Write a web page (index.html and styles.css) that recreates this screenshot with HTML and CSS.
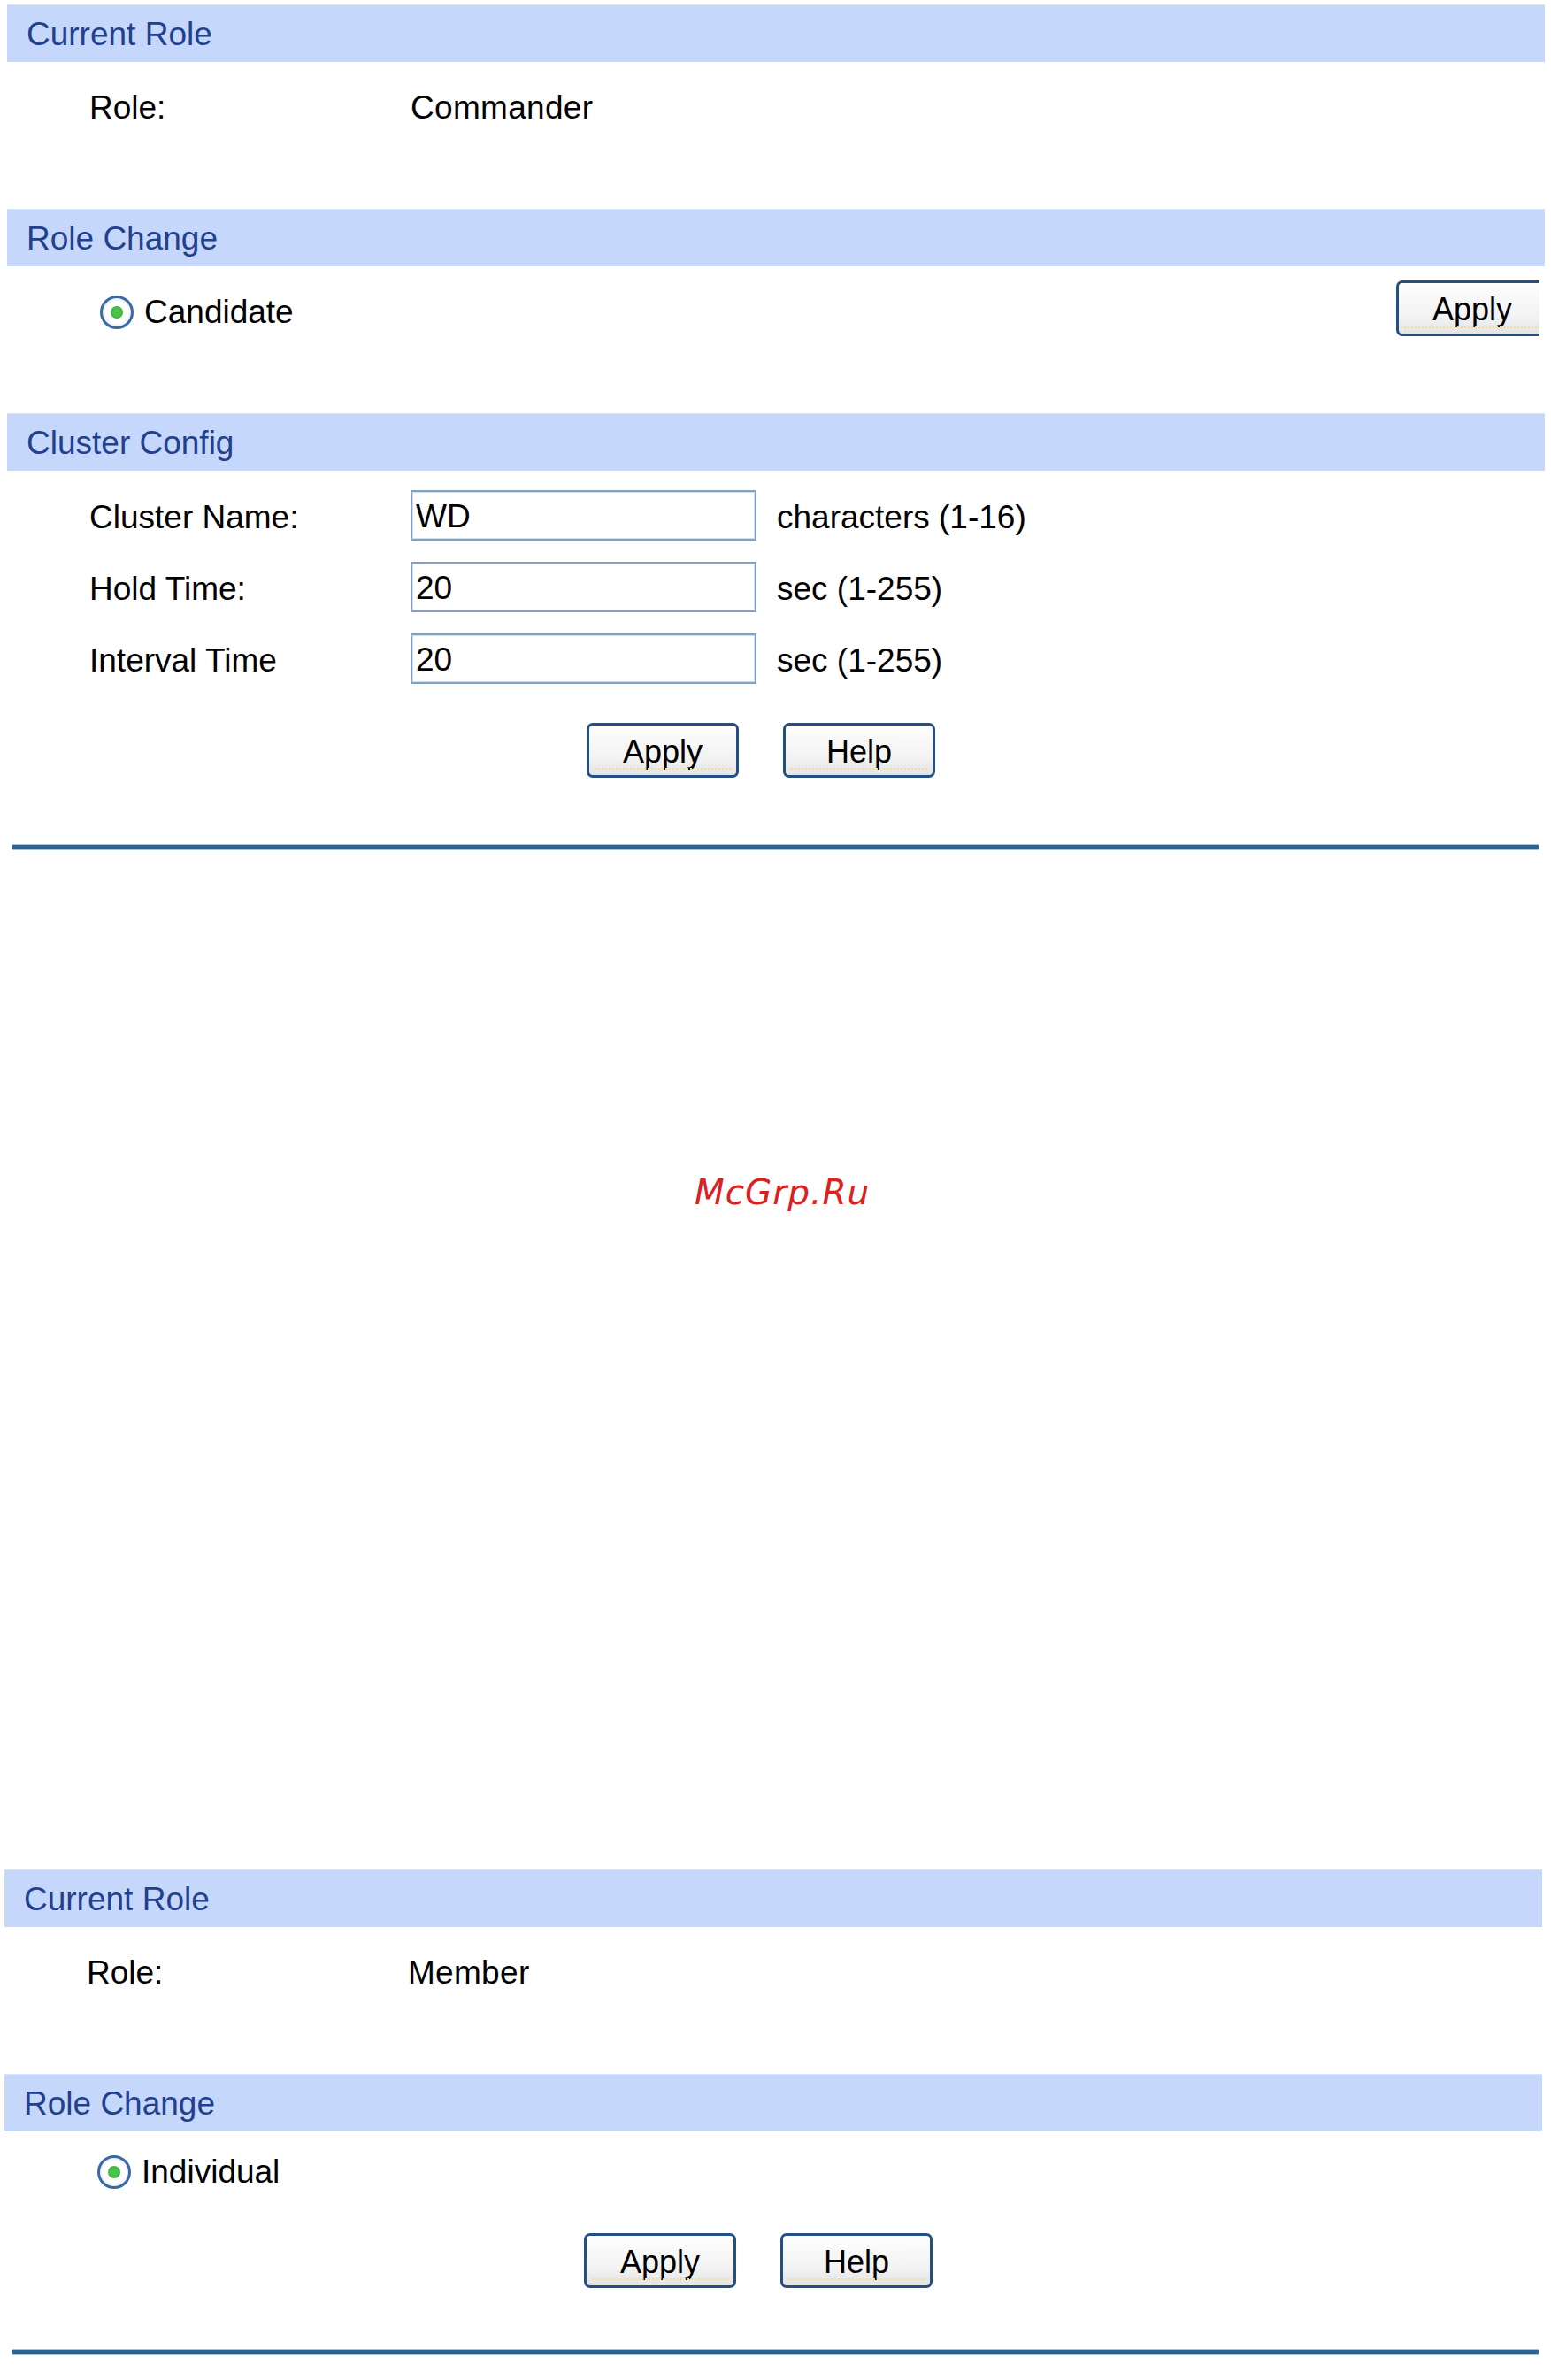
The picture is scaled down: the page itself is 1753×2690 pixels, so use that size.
FILE: index.html
```html
<!DOCTYPE html>
<html lang="en">
<head>
<meta charset="utf-8">
<title>Cluster Config</title>
<link rel="stylesheet" href="styles.css">
</head>
<body>
<div class="page">
  <section class="panel first">
    <div class="bar">Current Role</div>
    <div class="info-row"><span class="label">Role:</span><span class="value">Commander</span></div>
    <div class="bar">Role Change</div>
    <div class="choice-row">
      <div class="choice"><span class="radio"><span class="dot"></span></span><span>Candidate</span></div>
      <div class="btn-clip"><button class="btn" type="button">Apply</button></div>
    </div>
    <div class="bar">Cluster Config</div>
    <div class="form">
      <div class="field"><span class="label">Cluster Name:</span><span class="input">WD</span><span class="suffix">characters (1-16)</span></div>
      <div class="field"><span class="label">Hold Time:</span><span class="input">20</span><span class="suffix">sec (1-255)</span></div>
      <div class="field"><span class="label">Interval Time</span><span class="input">20</span><span class="suffix">sec (1-255)</span></div>
    </div>
    <div class="actions">
      <button class="btn" type="button">Apply</button>
      <button class="btn" type="button">Help</button>
    </div>
    <div class="rule"></div>
  </section>

  <div class="gap-area"><span class="wm">McGrp.Ru</span></div>

  <section class="panel second">
    <div class="bar">Current Role</div>
    <div class="info-row"><span class="label">Role:</span><span class="value">Member</span></div>
    <div class="bar">Role Change</div>
    <div class="choice-row single">
      <div class="choice"><span class="radio"><span class="dot"></span></span><span>Individual</span></div>
    </div>
    <div class="actions">
      <button class="btn" type="button">Apply</button>
      <button class="btn" type="button">Help</button>
    </div>
    <div class="rule"></div>
  </section>
</div>
</body>
</html>
```

FILE: styles.css
```css
html, body {
  margin: 0;
  padding: 0;
  background: #ffffff;
}

body {
  font-family: "Liberation Sans", Arial, sans-serif;
  font-size: 37px;
  color: #000000;
}

.page {
  padding: 5px 7px 0 8px;
}

.bar {
  box-sizing: border-box;
  height: 65px;
  padding: 3px 0 0 22px;
  line-height: 62px;
  background: #c5d8fc;
  color: #22408e;
  box-shadow: inset 0 1px 0 #d6e4fd;
}

.info-row {
  display: flex;
  height: 166px;
  box-sizing: border-box;
  padding: 30px 0 0 93px;
  line-height: 44px;
}

.info-row .label {
  width: 363px;
}

.value {
  letter-spacing: 0.3px;
}

.choice-row {
  display: flex;
  justify-content: space-between;
  align-items: flex-start;
  height: 166px;
  box-sizing: border-box;
  padding: 0 6px 0 105px;
}

.choice {
  display: flex;
  align-items: center;
  gap: 12px;
  height: 44px;
  line-height: 44px;
  margin-top: 30px;
}

.choice-label {
  padding-top: 3px;
}

.radio {
  box-sizing: border-box;
  width: 38px;
  height: 38px;
  border-radius: 50%;
  border: 3px solid #3a6aa6;
  background: radial-gradient(circle, #ffffff 0 55%, #e3e7ee 75%, #cfd6e0 100%);
  display: flex;
  align-items: center;
  justify-content: center;
  flex: none;
}

.dot {
  width: 14px;
  height: 14px;
  border-radius: 50%;
  background: radial-gradient(circle, #49c449 0 40%, #2a9f2a 100%);
}

.btn-clip {
  width: 162px;
  height: 63px;
  overflow: hidden;
  margin-top: 16px;
}

.btn-clip .btn {
  height: 63px;
}

.btn {
  position: relative;
  box-sizing: border-box;
  width: 172px;
  height: 62px;
  padding: 3px 0 0 0;
  border: 3px solid #234f82;
  border-radius: 7px;
  background: linear-gradient(#fdfdfd, #f3f3f3 65%, #e4e4e4);
  font-family: "Liberation Sans", Arial, sans-serif;
  font-size: 36px;
  color: #000000;
  display: flex;
  align-items: center;
  justify-content: center;
  flex: none;
}

.btn::after {
  content: "";
  position: absolute;
  left: 6px;
  right: 6px;
  bottom: 6px;
  border-bottom: 2px dotted #eadf9c;
}

.form {
  display: flex;
  flex-direction: column;
  gap: 24px;
  padding: 22px 0 0 93px;
}

.field {
  display: flex;
  align-items: center;
  height: 57px;
}

.field .label {
  width: 363px;
  padding-top: 4px;
}

.input {
  box-sizing: border-box;
  width: 391px;
  height: 57px;
  border: 2px solid #86a0c0;
  box-shadow: inset 0 0 0 1px #d3deeb;
  padding: 3px 0 0 4px;
  line-height: 50px;
  background: #ffffff;
}

.suffix {
  margin-left: 23px;
  padding-top: 4px;
}

.actions {
  display: flex;
  gap: 50px;
  padding-left: 655px;
  margin-top: 44px;
}

.rule {
  box-sizing: border-box;
  height: 7px;
  margin: 75px 7px 0 6px;
  background: #2c6494;
  border-top: 1px solid #a9c5dc;
  border-bottom: 1px solid #a9c5dc;
}

.gap-area {
  height: 1152px;
  box-sizing: border-box;
  padding: 363px 0 0 777px;
}

.wm {
  font-family: "DejaVu Sans", sans-serif;
  font-style: oblique;
  font-size: 39px;
  letter-spacing: 1px;
  line-height: 48px;
  color: #d9211f;
}

.second {
  margin-left: -3px;
  margin-right: 3px;
}

.choice-row.single {
  height: auto;
}

.choice-row.single .choice {
  margin-top: 24px;
}

.second .actions {
  margin-top: 47px;
}

.second .rule {
  margin: 69px 4px 0 9px;
}
```
